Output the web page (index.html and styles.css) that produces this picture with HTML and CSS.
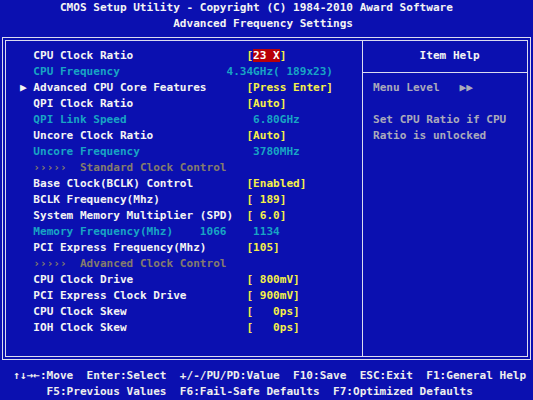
FILE: index.html
```html
<!DOCTYPE html>
<html>
<head>
<meta charset="utf-8">
<link rel="stylesheet" href="styles.css">
</head>
<body>
<div class="screen">
  <div class="title">
    <div class="row w t1">CMOS Setup Utility - Copyright (C) 1984-2010 Award Software</div>
    <div class="row w t2">Advanced Frequency Settings</div>
  </div>
  <div class="frame">
    <div class="box">
      <div class="menu">
        <div class="item"><span class="mark"></span><span class="label w">CPU Clock Ratio</span><span class="val y">[<span class="sel">23 X</span>]</span></div>
        <div class="item c"><span class="mark"></span><span class="label">CPU Frequency</span><span class="val shift-l">4.34GHz( 189x23)</span></div>
        <div class="item"><span class="mark w">▶</span><span class="label w">Advanced CPU Core Features</span><span class="val y">[Press Enter]</span></div>
        <div class="item"><span class="mark"></span><span class="label w">QPI Clock Ratio</span><span class="val y">[Auto]</span></div>
        <div class="item c"><span class="mark"></span><span class="label">QPI Link Speed</span><span class="val shift-r">6.80GHz</span></div>
        <div class="item"><span class="mark"></span><span class="label w">Uncore Clock Ratio</span><span class="val y">[Auto]</span></div>
        <div class="item c"><span class="mark"></span><span class="label">Uncore Frequency</span><span class="val shift-r">3780MHz</span></div>
        <div class="item g"><span class="mark"></span><span class="label">›››››  Standard Clock Control</span><span class="val"></span></div>
        <div class="item"><span class="mark"></span><span class="label w">Base Clock(BCLK) Control</span><span class="val y">[Enabled]</span></div>
        <div class="item"><span class="mark"></span><span class="label w">BCLK Frequency(Mhz)</span><span class="val y">[ 189]</span></div>
        <div class="item"><span class="mark"></span><span class="label w">System Memory Multiplier (SPD)</span><span class="val y">[ 6.0]</span></div>
        <div class="item c"><span class="mark"></span><span class="label">Memory Frequency(Mhz)    1066</span><span class="val shift-r">1134</span></div>
        <div class="item"><span class="mark"></span><span class="label w">PCI Express Frequency(Mhz)</span><span class="val y">[105]</span></div>
        <div class="item g"><span class="mark"></span><span class="label">›››››  Advanced Clock Control</span><span class="val"></span></div>
        <div class="item"><span class="mark"></span><span class="label w">CPU Clock Drive</span><span class="val y">[ 800mV]</span></div>
        <div class="item"><span class="mark"></span><span class="label w">PCI Express Clock Drive</span><span class="val y">[ 900mV]</span></div>
        <div class="item"><span class="mark"></span><span class="label w">CPU Clock Skew</span><span class="val y">[   0ps]</span></div>
        <div class="item"><span class="mark"></span><span class="label w">IOH Clock Skew</span><span class="val y">[   0ps]</span></div>
      </div>
      <div class="help">
        <div class="help-head">
          <div class="row w">Item Help</div>
        </div>
        <div class="help-body">
          <div class="row h">Menu Level   ▶▶</div>
          <div class="row h"> </div>
          <div class="row h">Set CPU Ratio if CPU</div>
          <div class="row h">Ratio is unlocked</div>
        </div>
      </div>
    </div>
  </div>
  <div class="footer">
    <div class="row f k1">↑↓→←:Move  Enter:Select  +/-/PU/PD:Value  F10:Save  ESC:Exit  F1:General Help</div>
    <div class="row f k2">F5:Previous Values  F6:Fail-Safe Defaults  F7:Optimized Defaults</div>
  </div>
</div>
</body>
</html>
```

FILE: styles.css
```css
html, body {
  margin: 0;
  padding: 0;
  background: #0b10b0;
}

.screen {
  width: 533px;
  height: 400px;
  overflow: hidden;
  background: #0b10b0;
  font-family: "DejaVu Sans Mono", "Liberation Mono", monospace;
  font-size: 11.07px;
  font-weight: bold;
  color: #f4f4f4;
}

.row {
  height: 16px;
  line-height: 16px;
  white-space: pre;
}

.t1 { padding-left: 9ch; }
.t2 { padding-left: 26ch; }

.w { color: #f4f4f4; }
.c { color: #18a4c4; }
.y { color: #f6f048; }
.g { color: #847c6c; }
.h { color: #aaaabb; }
.f { color: #eeeeee; }

.sel {
  background: #b80008;
  color: #ffffff;
}

.frame {
  box-sizing: border-box;
  margin: 5px 0 0 2px;
  width: 529px;
  height: 323px;
  padding: 2px;
  border: 1px solid #dcdcf0;
}

.box {
  box-sizing: border-box;
  height: 100%;
  border: 1px solid #dcdcf0;
  display: flex;
}

.menu {
  box-sizing: border-box;
  width: 356px;
  flex: none;
  padding: 7px 0 0 14px;
}

.item {
  display: grid;
  grid-template-columns: 2ch 32ch auto;
  height: 16px;
  line-height: 16px;
  white-space: pre;
}

.shift-l { margin-left: -3ch; }
.shift-r { margin-left: 1ch; }

.help {
  flex: 1;
  border-left: 1px solid #dcdcf0;
  display: flex;
  flex-direction: column;
}

.help-head {
  padding: 7px 0 8px 10px;
  border-bottom: 1px solid #dcdcf0;
}

.help-head .row { padding-left: 7ch; }

.help-body {
  padding: 7px 0 0 10px;
}

.footer {
  margin-top: 8px;
}

.k1 { padding-left: 2ch; }
.k2 { padding-left: 7ch; }
```
